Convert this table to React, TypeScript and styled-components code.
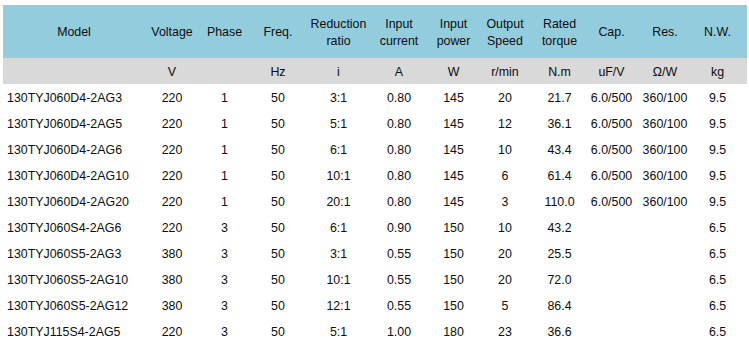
import styled, { createGlobalStyle } from "styled-components";

const GlobalStyle = createGlobalStyle`
    body {
        margin: 0;
        background: #ffffff;
        font-family: Arial, "Liberation Sans", sans-serif;
    }
`;

const Table = styled.table`
    margin: 5px 0 0 3px;
    width: 744px;
    border-collapse: collapse;
    table-layout: fixed;
    font-size: 12.4px;
    color: #0d0d0d;
`;

const HeadRow = styled.tr`
    height: 53px;
    background-color: #93cddd;
`;

const UnitRow = styled.tr`
    height: 26px;
    background-color: #d9d9d9;
`;

const DataRow = styled.tr`
    height: 26px;
`;

const HeadCell = styled.th<{ $last?: boolean }>`
    font-weight: normal;
    text-align: center;
    line-height: 17px;
    padding: 2px ${(p) => (p.$last ? "8px" : "0")} 0 0;
    vertical-align: middle;
`;

const Cell = styled.td<{ $left?: boolean; $last?: boolean }>`
    text-align: ${(p) => (p.$left ? "left" : "center")};
    padding: 2px ${(p) => (p.$last ? "8px" : "0")} 0 ${(p) => (p.$left ? "4px" : "0")};
    white-space: nowrap;
    vertical-align: middle;
`;

const widths = [142, 54, 51, 56, 65, 56, 53, 50, 59, 45, 62, 51];

const headers = [
    ["Model"],
    ["Voltage"],
    ["Phase"],
    ["Freq."],
    ["Reduction", "ratio"],
    ["Input", "current"],
    ["Input", "power"],
    ["Output", "Speed"],
    ["Rated", "torque"],
    ["Cap."],
    ["Res."],
    ["N.W."],
];

const units = ["", "V", "", "Hz", "i", "A", "W", "r/min", "N.m", "uF/V", "Ω/W", "kg"];

const rows = [
    ["130TYJ060D4-2AG3", "220", "1", "50", "3:1", "0.80", "145", "20", "21.7", "6.0/500", "360/100", "9.5"],
    ["130TYJ060D4-2AG5", "220", "1", "50", "5:1", "0.80", "145", "12", "36.1", "6.0/500", "360/100", "9.5"],
    ["130TYJ060D4-2AG6", "220", "1", "50", "6:1", "0.80", "145", "10", "43.4", "6.0/500", "360/100", "9.5"],
    ["130TYJ060D4-2AG10", "220", "1", "50", "10:1", "0.80", "145", "6", "61.4", "6.0/500", "360/100", "9.5"],
    ["130TYJ060D4-2AG20", "220", "1", "50", "20:1", "0.80", "145", "3", "110.0", "6.0/500", "360/100", "9.5"],
    ["130TYJ060S4-2AG6", "220", "3", "50", "6:1", "0.90", "150", "10", "43.2", "", "", "6.5"],
    ["130TYJ060S5-2AG3", "380", "3", "50", "3:1", "0.55", "150", "20", "25.5", "", "", "6.5"],
    ["130TYJ060S5-2AG10", "380", "3", "50", "10:1", "0.55", "150", "20", "72.0", "", "", "6.5"],
    ["130TYJ060S5-2AG12", "380", "3", "50", "12:1", "0.55", "150", "5", "86.4", "", "", "6.5"],
    ["130TYJ115S4-2AG5", "220", "3", "50", "5:1", "1.00", "180", "23", "36.6", "", "", "6.5"],
];

function App() {
    const lastIdx = widths.length - 1;

    return (
        <>
            <GlobalStyle />
            <Table>
                <colgroup>
                    {widths.map((w, i) => (
                        <col key={i} style={{ width: w }} />
                    ))}
                </colgroup>
                <thead>
                    <HeadRow>
                        {headers.map((lines, i) => (
                            <HeadCell key={i} $last={i === lastIdx}>
                                {lines.map((l, j) => (
                                    <div key={j}>{l}</div>
                                ))}
                            </HeadCell>
                        ))}
                    </HeadRow>
                    <UnitRow>
                        {units.map((u, i) => (
                            <Cell key={i} $last={i === lastIdx}>{u}</Cell>
                        ))}
                    </UnitRow>
                </thead>
                <tbody>
                    {rows.map((r, i) => (
                        <DataRow key={i}>
                            {r.map((v, j) => (
                                <Cell key={j} $left={j === 0} $last={j === lastIdx}>
                                    {v}
                                </Cell>
                            ))}
                        </DataRow>
                    ))}
                </tbody>
            </Table>
        </>
    );
}

export default App;
